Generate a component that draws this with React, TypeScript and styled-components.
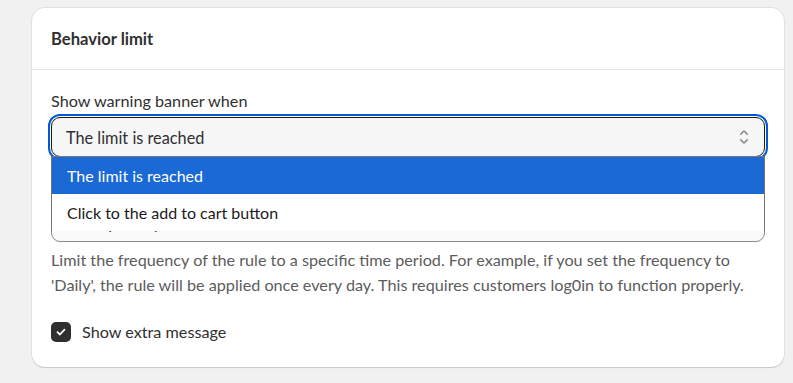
import styled, { createGlobalStyle } from "styled-components";

const GlobalStyle = createGlobalStyle`
  html, body {
    margin: 0;
    padding: 0;
    background: #f1f1f1;
  }
  body {
    font-family: "Lato", "Liberation Sans", sans-serif;
    color: #303030;
  }
`;

const Page = styled.div`
  padding: 8px 9px 16px 32px;
`;

const Card = styled.section`
  width: 752px;
  background: #fff;
  border-radius: 13px;
  box-shadow: 0 0 0 1px rgba(0, 0, 0, 0.06), 0 1px 1px rgba(0, 0, 0, 0.12);
`;

const Header = styled.header`
  height: 61px;
  display: flex;
  align-items: center;
  padding: 0 19px;
  border-bottom: 1px solid #e3e3e3;
  font-size: 16.6px;
  font-weight: 700;
  color: #303030;
`;

const Body = styled.div`
  padding: 18px 19px 23px;
  display: flex;
  flex-direction: column;
`;

const Field = styled.div<{ $top?: number }>`
  display: flex;
  flex-direction: column;
  gap: 4px;
  margin-top: ${(p) => p.$top ?? 0}px;
`;

const Label = styled.label`
  height: 25px;
  font-size: 16.2px;
  line-height: 25px;
  color: #303030;
`;

const SelectWrap = styled.div`
  position: relative;
`;

const SelectBox = styled.div<{ $focused?: boolean }>`
  height: 40px;
  box-sizing: border-box;
  display: flex;
  align-items: center;
  justify-content: space-between;
  padding: 0 14px;
  border-radius: 9px;
  background: ${(p) => (p.$focused ? "#f6f6f6" : "#fafafa")};
  border: 1px solid ${(p) => (p.$focused ? "#1a1a1a" : "#8a8a8a")};
  outline: ${(p) => (p.$focused ? "2px solid #005bd3" : "none")};
  outline-offset: 1px;
  font-size: 16.3px;
  color: #303030;
`;

const Chevrons = styled.svg`
  width: 22px;
  height: 22px;
  fill: #8a8a8a;
  margin-right: -5px;
`;

const Menu = styled.ul`
  position: absolute;
  top: calc(100% - 1px);
  left: 0;
  right: 0;
  margin: 0;
  padding: 0;
  list-style: none;
  background: #fff;
  border: 1px solid #767676;
  border-bottom: none;
  z-index: 5;
`;

const Option = styled.li<{ $active?: boolean }>`
  height: 37px;
  display: flex;
  align-items: center;
  padding: 0 15px;
  font-size: 16px;
  background: ${(p) => (p.$active ? "#1a69d4" : "#fff")};
  color: ${(p) => (p.$active ? "#fff" : "#1a1a1a")};
`;

const Help = styled.p`
  margin: 5px 0 0;
  font-size: 16.2px;
  line-height: 25px;
  color: #5c5c5c;
`;

const CheckRow = styled.label`
  display: flex;
  align-items: center;
  gap: 11px;
  margin-top: 22px;
  font-size: 16.2px;
  line-height: 25px;
  color: #303030;
`;

const Box = styled.span`
  width: 20px;
  height: 20px;
  border-radius: 5px;
  background: #303030;
  display: flex;
  align-items: center;
  justify-content: center;
`;

const SelectIcon = () => (
  <Chevrons viewBox="0 0 20 20">
    <path d="M10.884 4.323a1.25 1.25 0 0 0-1.768 0l-2.646 2.647a.75.75 0 0 0 1.06 1.06l2.47-2.47 2.47 2.47a.75.75 0 1 0 1.06-1.06l-2.646-2.647Z" />
    <path d="m13.53 13.03-2.646 2.647a1.25 1.25 0 0 1-1.768 0l-2.646-2.647a.75.75 0 0 1 1.06-1.06l2.47 2.47 2.47-2.47a.75.75 0 0 1 1.06 1.06Z" />
  </Chevrons>
);

export default function App() {
  const options = ["The limit is reached", "Click to the add to cart button"];
  return (
    <>
      <GlobalStyle />
      <Page>
        <Card>
          <Header>Behavior limit</Header>
          <Body>
            <Field>
              <Label>Show warning banner when</Label>
              <SelectWrap>
                <SelectBox $focused>
                  <span>{options[0]}</span>
                  <SelectIcon />
                </SelectBox>
                <Menu>
                  {options.map((o, i) => (
                    <Option key={o} $active={i === 0}>
                      {o}
                    </Option>
                  ))}
                </Menu>
              </SelectWrap>
            </Field>
            <Field $top={16}>
              <Label />
              <SelectBox>
                <span>Once per day</span>
                <SelectIcon />
              </SelectBox>
            </Field>
            <Help>
              Limit the frequency of the rule to a specific time period. For example, if you set the
              frequency to 'Daily', the rule will be applied once every day. This requires customers
              log0in to function properly.
            </Help>
            <CheckRow>
              <Box>
                <svg width="12" height="12" viewBox="0 0 12 12">
                  <path d="M2.5 6.2 4.9 8.5 9.5 3.6" stroke="#fff" strokeWidth="1.8" fill="none" strokeLinecap="round" strokeLinejoin="round" />
                </svg>
              </Box>
              Show extra message
            </CheckRow>
          </Body>
        </Card>
      </Page>
    </>
  );
}
